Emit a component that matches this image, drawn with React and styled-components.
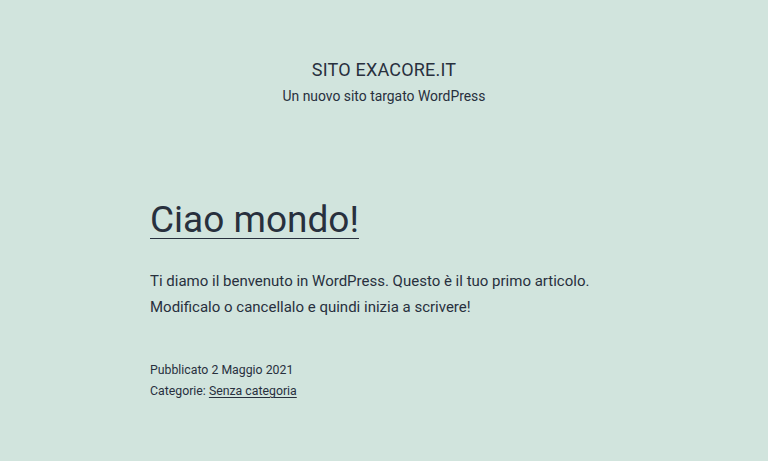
import React from 'react'
import styled, { createGlobalStyle } from 'styled-components'

const GlobalStyle = createGlobalStyle`
   html, body{
      margin: 0;
      padding: 0;
      background: #d1e4dd;
   }
   body{
      font-family: Roboto, "Liberation Sans", sans-serif;
      color: #28303d;
   }
`

const Page = styled.div`
   min-height: 461px;
   background: #d1e4dd;
   padding-top: 58px;
   box-sizing: border-box;
`

const Branding = styled.header`
   display: flex;
   flex-direction: column;
   align-items: center;
   gap: 4px;

   h1{
      margin: 0;
      font-size: 18px;
      font-weight: 400;
      line-height: 24px;
      letter-spacing: 0.2px;
   }
   p{
      margin: 0;
      font-size: 13.9px;
      line-height: 20px;
   }
`

const Article = styled.article`
   padding: 0 140px 0 150px;
   margin-top: 90px;
`

const Title = styled.h2`
   margin: 0;
   font-size: 37px;
   font-weight: 400;
   line-height: 48px;

   a{
      color: inherit;
      text-decoration: underline;
      text-decoration-thickness: 1px;
      text-underline-offset: 6px;
   }
`

const Body = styled.div`
   margin-top: 25px;
   font-size: 15px;
   line-height: 25.5px;

   p{ margin: 0; }
`

const Meta = styled.footer`
   margin-top: 40px;
   font-size: 12.3px;
   line-height: 21px;

   div{ margin: 0; }
   a{
      color: inherit;
      text-decoration: underline;
      text-underline-offset: 2px;
   }
`

const App = () => {
   return (
      <Page>
         <GlobalStyle />
         <Branding>
            <h1>SITO EXACORE.IT</h1>
            <p>Un nuovo sito targato WordPress</p>
         </Branding>
         <Article>
            <Title><a href="#">Ciao mondo!</a></Title>
            <Body>
               <p>Ti diamo il benvenuto in WordPress. Questo è il tuo primo articolo. Modificalo o cancellalo e quindi inizia a scrivere!</p>
            </Body>
            <Meta>
               <div>Pubblicato 2 Maggio 2021</div>
               <div>Categorie: <a href="#">Senza categoria</a></div>
            </Meta>
         </Article>
      </Page>
   )
}

export default App
